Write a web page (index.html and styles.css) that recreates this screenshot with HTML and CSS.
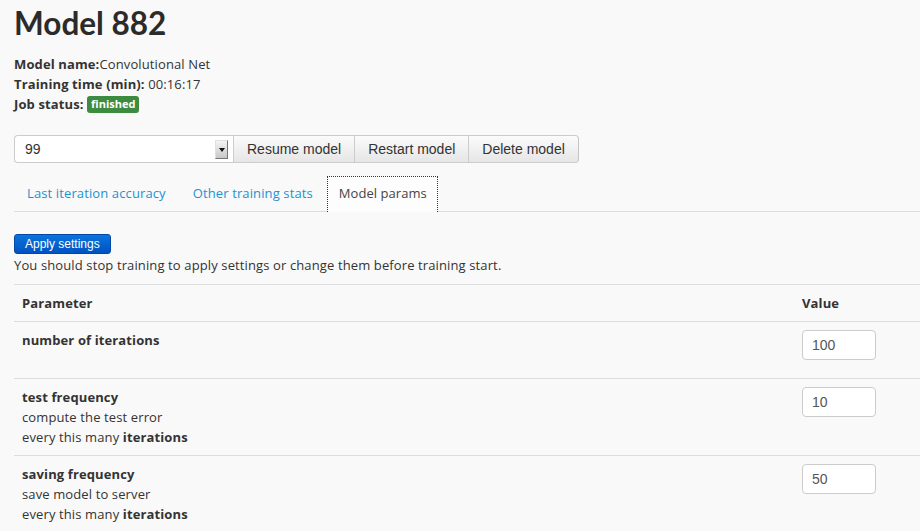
FILE: index.html
```html
<!DOCTYPE html>
<html>
<head>
<meta charset="utf-8">
<link rel="stylesheet" href="styles.css">
</head>
<body>
<div class="page">
  <h1 class="title">Model 882</h1>
  <div class="info">
    <div><b>Model name:</b>Convolutional Net</div>
    <div><b>Training time (min):</b> 00:16:17</div>
    <div><b>Job status:</b> <span class="badge">finished</span></div>
  </div>
  <div class="controls">
    <div class="select"><span class="sel-val">99</span><span class="sel-arrow"><span class="tri"></span></span></div>
    <button class="btn">Resume model</button>
    <button class="btn">Restart model</button>
    <button class="btn last">Delete model</button>
  </div>
  <div class="tabs">
    <a class="tab">Last iteration accuracy</a>
    <a class="tab">Other training stats</a>
    <a class="tab active">Model params</a>
  </div>
  <div class="apply-row"><button class="apply">Apply settings</button></div>
  <p class="note">You should stop training to apply settings or change them before training start.</p>
  <table class="params">
    <thead>
      <tr><th class="c1">Parameter</th><th class="c2">Value</th></tr>
    </thead>
    <tbody>
      <tr><td><b>number of iterations</b></td><td><input class="inp" value="100"></td></tr>
      <tr><td><b>test frequency</b><br>compute the test error<br>every this many <b>iterations</b></td><td><input class="inp" value="10"></td></tr>
      <tr><td><b>saving frequency</b><br>save model to server<br>every this many <b>iterations</b></td><td><input class="inp" value="50"></td></tr>
    </tbody>
  </table>
</div>
</body>
</html>
```
FILE: styles.css
```css
html, body { margin: 0; padding: 0; background: #f9f9f9; }
body { font-family: "Open Sans", Lato, sans-serif; font-size: 13px; line-height: 20px; color: #333; letter-spacing: 0.12px; }
.page { padding-left: 14px; }
.title { margin: 0; padding-top: 3px; font-family: Lato, sans-serif; font-size: 31.5px; line-height: 40px; font-weight: 700; color: #2b2b2b; height: 42px; letter-spacing: 0; }
.info { margin-top: 9px; }
.info b { font-weight: 700; }
.badge { display: inline-block; background: #3d8b40; color: #fff; font-weight: 700; font-size: 11px; line-height: 16px; padding: 0 4px 1px; border-radius: 3px; vertical-align: 1px; letter-spacing: 0; }
.controls { display: flex; margin-top: 21px; height: 28px; letter-spacing: 0; }
.select { width: 219px; box-sizing: border-box; background: #fff; border: 1px solid #ccc; border-right: none; border-radius: 4px 0 0 4px; display: flex; align-items: center; justify-content: space-between; padding-left: 10px; font-family: "Liberation Sans", Arial, sans-serif; font-size: 14px; color: #333; }
.sel-arrow { width: 11px; height: 17px; margin-right: 5px; background: linear-gradient(#f4f4f4, #c8c8c8); border: 1px solid #999; border-color: #e0e0e0 #777 #777 #e0e0e0; display: flex; align-items: center; justify-content: center; }
.tri { width: 0; height: 0; border-left: 3px solid transparent; border-right: 3px solid transparent; border-top: 4px solid #111; margin-top: 2px; }
.btn { font-family: "Liberation Sans", Arial, sans-serif; font-size: 14px; color: #333; background: linear-gradient(#fbfbfb, #e6e6e6); border: 1px solid #ccc; border-right: none; margin: 0; padding: 0 13px; height: 28px; }
.btn.last { border-right: 1px solid #c4c4c4; border-radius: 0 4px 4px 0; padding: 0 13px; }
.tabs { display: flex; margin-top: 13px; border-bottom: 1px solid #ddd; height: 35px; }
.tab { display: block; padding: 0 13px; line-height: 35px; color: #1e91d0; font-size: 13px; margin-right: 1px; }
.tab.active { color: #444; border: 1px dotted #333; border-bottom: none; padding: 0 10px 0 11px; margin-left: 0; background: #fdfdfd; height: 35px; line-height: 33px; letter-spacing: 0.05px; }
.apply-row { margin-top: 21px; }
.apply { font-family: "Liberation Sans", Arial, sans-serif; font-size: 12px; color: #fff; background: linear-gradient(#0a74db, #0052c2); border: 1px solid #0148a8; border-radius: 3px; height: 20px; padding: 0 10px; margin: 0; line-height: 16px; letter-spacing: 0; }
.note { margin: 1px 0 0; }
.params { width: 906px; border-collapse: collapse; margin-top: 9px; }
.params th, .params td { text-align: left; vertical-align: top; padding: 8px 8px; border-top: 1px solid #ddd; line-height: 20px; }
.params th { font-weight: 700; }
.params td b { font-weight: 700; }
.c2 { width: 110px; }
.inp { box-sizing: border-box; width: 74px; height: 30px; border: 1px solid #ccc; border-radius: 4px; padding: 4px 9px; font-family: "Liberation Sans", Arial, sans-serif; font-size: 14px; color: #555; margin: 0 0 10px; background: #fff; letter-spacing: 0; }
```
